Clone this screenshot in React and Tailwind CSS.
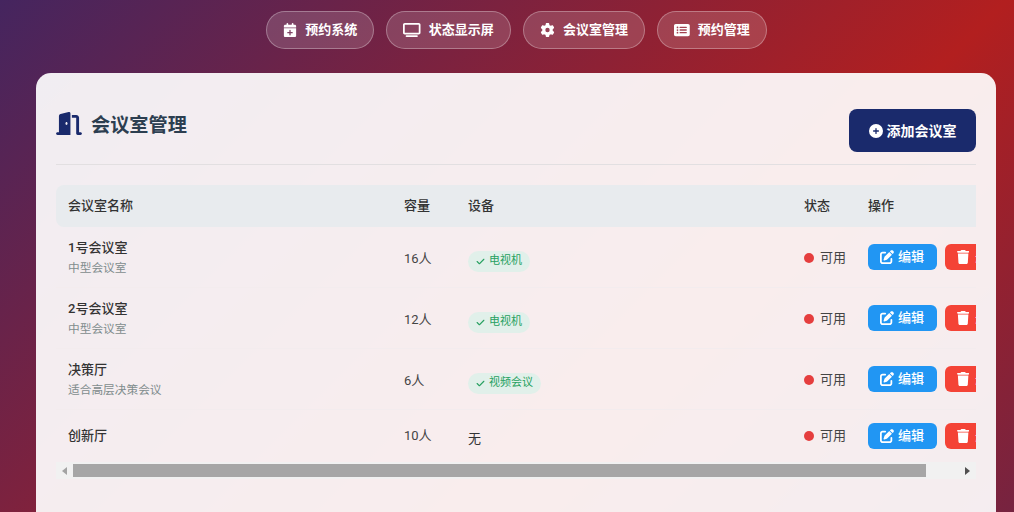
import { FaCalendarPlus, FaTv, FaGear, FaRectangleList, FaDoorOpen, FaCirclePlus, FaPenToSquare, FaTrash, FaCheck } from 'react-icons/fa6'

const navItems = [
  { label: '预约系统', icon: FaCalendarPlus, iconClass: 'h-[14px] w-[14px]' },
  { label: '状态显示屏', icon: FaTv, iconClass: 'h-[14px] w-[17.5px]' },
  { label: '会议室管理', icon: FaGear, iconClass: 'h-[14px] w-[15px]' },
  { label: '预约管理', icon: FaRectangleList, iconClass: 'h-[14px] w-[15.75px]' },
]

const rooms = [
  { name: '1号会议室', desc: '中型会议室', capacity: '16人', device: '电视机' },
  { name: '2号会议室', desc: '中型会议室', capacity: '12人', device: '电视机' },
  { name: '决策厅', desc: '适合高层决策会议', capacity: '6人', device: '视频会议' },
  { name: '创新厅', capacity: '10人' },
]

const App = () => {
  return (
    <div className="flex h-screen flex-col overflow-hidden bg-[linear-gradient(135deg,#45255f_0%,#b21f1f_66%,#762340_100%)] font-['Roboto','Noto_Sans_CJK_SC',sans-serif] text-[#333]">
      <nav className="ml-[19px] flex justify-center gap-3 pt-[11px]">
        {navItems.map(({ label, icon: Icon, iconClass }) => (
          <a
            key={label}
            className="flex h-[38px] items-center gap-2 rounded-full border border-white/30 bg-white/15 px-4 text-[13px] font-bold text-white"
          >
            <Icon className={iconClass} />
            {label}
          </a>
        ))}
      </nav>

      <main className="mt-6 mr-[18px] ml-9 min-h-0 flex-1 rounded-t-[15px] bg-white/92 px-5 pt-5">
        <header className="flex h-[72px] items-start justify-between border-b border-[#e2dfe1] pt-4">
          <h1 className="flex items-center gap-[9px] pt-[3px] text-[19.2px] font-semibold text-[#2c3e50]">
            <FaDoorOpen className="-mt-[5px] h-[23px] w-[26px] text-[#1a2a6c]" />
            会议室管理
          </h1>
          <button className="flex h-[43px] w-[127px] items-center justify-center gap-[4px] rounded-lg bg-[#1a2a6c] text-sm font-semibold text-white">
            <FaCirclePlus className="h-[14px] w-[14px]" />
            添加会议室
          </button>
        </header>

        <div className="mt-5 overflow-hidden">
          <table className="w-[967px] table-fixed border-separate border-spacing-0 text-[13px]">
            <thead>
              <tr className="h-[42px] text-left">
                <th className="w-[336px] rounded-l-lg bg-[#e8ebee] px-3 font-medium">会议室名称</th>
                <th className="w-[64px] bg-[#e8ebee] px-3 font-medium">容量</th>
                <th className="w-[336px] bg-[#e8ebee] px-3 font-medium">设备</th>
                <th className="w-[64px] bg-[#e8ebee] px-3 font-medium">状态</th>
                <th className="w-[167px] rounded-r-lg bg-[#e8ebee] px-3 font-medium">操作</th>
              </tr>
            </thead>
            <tbody>
              {rooms.map((room) => (
                <tr key={room.name} className={room.desc ? 'h-[61px] [&>td]:border-b [&>td]:border-[#f3ecee]' : 'h-[52px]'}>
                  <td className={room.desc ? 'px-3 pt-[2px]' : 'px-3'}>
                    <div className="font-medium">{room.name}</div>
                    {room.desc && <div className="mt-[2px] text-[11.7px] text-[#7f8c8d]">{room.desc}</div>}
                  </td>
                  <td className={room.desc ? 'px-3 pt-[4px] text-[#444]' : 'px-3 text-[#444]'}>{room.capacity}</td>
                  <td className={room.device ? 'px-3 pt-[9px]' : 'px-3 pt-[6px]'}>
                    {room.device ? (
                      <span className="inline-flex h-[21px] items-center gap-1 rounded-full bg-[#e1f0ea] px-2 text-[11px] text-[#27a060]">
                        <FaCheck className="h-[9px] w-[9px]" />
                        {room.device}
                      </span>
                    ) : (
                      '无'
                    )}
                  </td>
                  <td className={room.desc ? 'px-3 pt-[2px]' : 'px-3'}>
                    <div className="flex items-center gap-[6px] whitespace-nowrap text-[#444]">
                      <span className="h-[10px] w-[10px] shrink-0 rounded-full bg-[#e53e3e]" />
                      可用
                    </div>
                  </td>
                  <td className="px-3">
                    <div className="flex gap-2">
                      <button className="flex h-[26px] w-[69px] shrink-0 items-center gap-1 rounded-md bg-[#2196f3] px-3 text-[13px] font-medium whitespace-nowrap text-white">
                        <FaPenToSquare className="h-[14px] w-[14px] shrink-0" />
                        编辑
                      </button>
                      <button className="flex h-[26px] w-[66px] shrink-0 items-center gap-[6px] rounded-md bg-[#f44336] px-3 text-[13px] font-medium whitespace-nowrap text-white">
                        <FaTrash className="h-[14px] w-[12.25px] shrink-0" />
                        删除
                      </button>
                    </div>
                  </td>
                </tr>
              ))}
            </tbody>
          </table>
        </div>

        <div className="flex h-[17px] items-center bg-[#f1f1f1]">
          <div className="flex w-[17px] justify-center">
            <span className="h-0 w-0 border-y-[4px] border-r-[5px] border-y-transparent border-r-[#a3a3a3]" />
          </div>
          <div className="h-[13px] w-[853px] bg-[#a6a6a6]" />
          <div className="ml-auto flex w-[17px] justify-center">
            <span className="h-0 w-0 border-y-[4px] border-l-[5px] border-y-transparent border-l-[#505050]" />
          </div>
        </div>
      </main>
    </div>
  )
}

export default App
